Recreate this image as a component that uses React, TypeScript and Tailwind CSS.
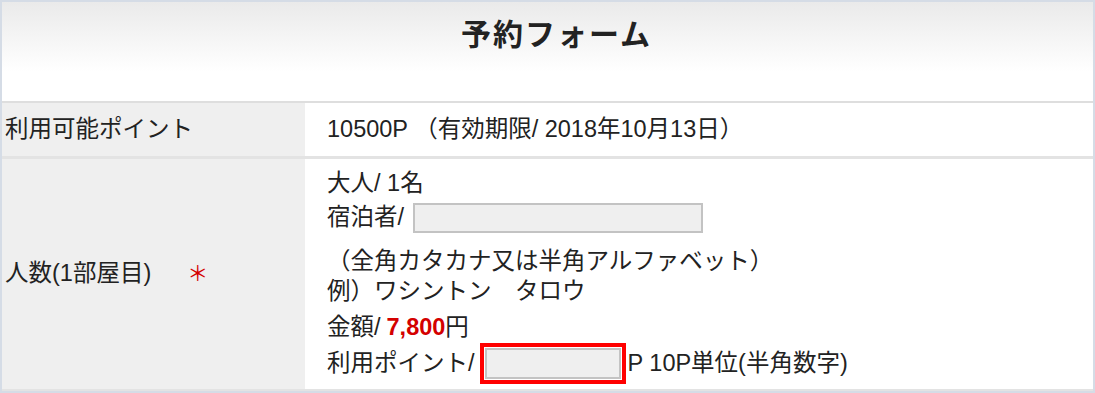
import React from "react";

const font = { fontFamily: '"Liberation Sans", "Noto Sans CJK JP", sans-serif' };

export default function App() {
  return (
    <div className="w-[1095px] h-[393px] bg-white overflow-hidden" style={font}>
      <div className="w-[1095px] border-x-2 border-t-2 border-b-[3px] border-[#d5dce6] text-[#222] text-[23.5px]">
        <div className="h-[99px] bg-[linear-gradient(to_bottom,#eaeaea,#ffffff_70%)]">
          <div className="h-[64px] flex items-center justify-center pl-[18px] text-[30px] font-bold tracking-[2px] text-[#222]">
            予約フォーム
          </div>
        </div>
        <div className="h-[2px] bg-[#dedede]" />
        <div className="grid grid-cols-[303px_1fr] h-[53px]">
          <div className="bg-[#efefef] flex items-center pl-[3px]">利用可能ポイント</div>
          <div className="flex items-center pl-[22px]">10500P （有効期限/ 2018年10月13日）</div>
        </div>
        <div className="h-[3px] bg-[#e3e3e3]" />
        <div className="grid grid-cols-[303px_1fr] h-[230px]">
          <div className="bg-[#efefef] flex items-center pl-[3px]">
            <span>人数(1部屋目)</span>
            <span className="ml-[36px] text-[#d40000] text-[21px]">＊</span>
          </div>
          <div className="flex flex-col pl-[22px] pt-[8px]">
            <div className="h-[34px] flex items-center">大人/ 1名</div>
            <div className="h-[30px] mt-[2px] flex items-center">
              <span>宿泊者/</span>
              <div className="ml-[9px] w-[290px] h-[30px] border-2 border-[#c3c3c3] bg-[#efefef]" />
            </div>
            <div className="h-[30px] mt-[14px] flex items-center">（全角カタカナ又は半角アルファベット）</div>
            <div className="h-[30px] flex items-center">例）ワシントン　タロウ</div>
            <div className="h-[30px] mt-[6px] flex items-center">
              <span>金額/ </span>
              <span className="ml-[6px] text-[#d40000] font-bold">7,800</span>
              <span>円</span>
            </div>
            <div className="h-[41px] flex items-center">
              <span>利用ポイント/</span>
              <div className="ml-[5px] w-[146px] h-[41px] border-[4px] border-[#ff0000] bg-white p-[1px]">
                <div className="w-full h-full border-2 border-[#c3c3c3] bg-[#efefef]" />
              </div>
              <span className="ml-[2px]">P 10P単位(半角数字)</span>
            </div>
          </div>
        </div>
        <div className="h-[2px] bg-[#e3e3e3]" />
      </div>
    </div>
  );
}
